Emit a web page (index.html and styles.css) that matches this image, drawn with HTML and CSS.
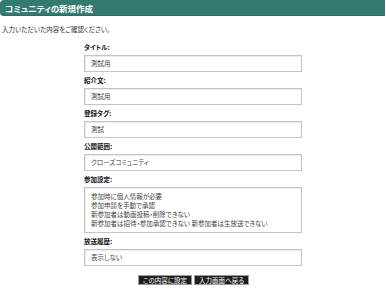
FILE: index.html
```html
<!DOCTYPE html>
<html lang="ja">
<head>
    <meta charset="UTF-8">
    <meta name="viewport" content="width=device-width, initial-scale=1.0">
    <title>コミュニティの新規作成</title>
<link rel="stylesheet" href="styles.css">
</head>
<body>
    <h1 class="head">コミュニティの新規作成</h1>
    <p class="intro">入力いただいた内容をご確認ください。</p>
    <div class="form">
        <div class="field">
            <div class="label">タイトル:</div>
            <div class="box">測試用</div>
        </div>
        <div class="field">
            <div class="label">紹介文:</div>
            <div class="box">測試用</div>
        </div>
        <div class="field">
            <div class="label">登録タグ:</div>
            <div class="box">測試</div>
        </div>
        <div class="field">
            <div class="label">公開範囲:</div>
            <div class="box">クローズコミュニティ</div>
        </div>
        <div class="field">
            <div class="label">参加設定:</div>
            <div class="box multi">
                参加時に個人情報が必要<br>
                参加申請を手動で承認<br>
                新参加者は動画投稿・削除できない<br>
                新参加者は招待・参加承認できない 新参加者は生放送できない
            </div>
        </div>
        <div class="field">
            <div class="label">放送履歴:</div>
            <div class="box">表示しない</div>
        </div>
    </div>
    <div class="btns">
        <button class="btn">この内容に設定</button><button class="btn">入力画面へ戻る</button>
    </div>
</body>
</html>
```

FILE: styles.css
```css
*{
    margin:0;
    padding:0;
    box-sizing: border-box;
}
body{
    font-family: "Noto Sans CJK JP", "Noto Sans", sans-serif;
    font-feature-settings: "palt";
    font-size: 6.5px;
    color: #222;
    background: #fff;
}
.head{
    height: 16px;
    line-height: 16px;
    margin-right: 1px;
    padding-left: 5px;
    background: #347a70;
    border-radius: 4px 0 0 4px;
    border-bottom: 1px solid #2b6b61;
    color: #fff;
    font-size: 8.5px;
    font-weight: bold;
}
.intro{
    margin-top: 9px;
    padding-left: 2px;
    line-height: 9px;
    color: #333;
}
.form{
    width: 218px;
    margin: 9px 0 0 84px;
}
.field{
    margin-bottom: 4px;
}
.label{
    line-height: 9px;
    margin-bottom: 3px;
    font-weight: bold;
    color: #111;
}
.box{
    border: 1px solid #c4c4c4;
    box-shadow: inset 1px 1px 0 #ececec;
    padding: 3px 6px;
    line-height: 9px;
    color: #444;
}
.box.multi{
    padding: 4px 6px;
}
.btns{
    display: flex;
    justify-content: center;
    gap: 2px;
    margin-top: 9px;
    padding-left: 1px;
}
.btn{
    height: 10px;
    padding: 0 4px;
    border: 1px solid #9a9a9a;
    background: #1e1e1e;
    color: #fff;
    font-family: inherit;
    font-feature-settings: "palt";
    font-size: 6.5px;
    line-height: 8px;
}
```
